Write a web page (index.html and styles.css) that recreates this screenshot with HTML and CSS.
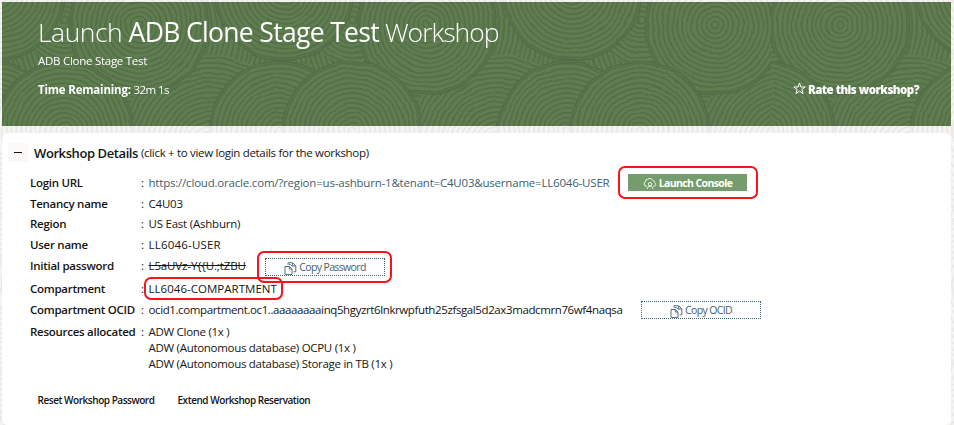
FILE: index.html
```html
<!DOCTYPE html>
<html lang="en">
<head>
<meta charset="utf-8">
<title>Launch Workshop</title>
<link rel="stylesheet" href="styles.css">
</head>
<body>
<svg class="defs" width="0" height="0" aria-hidden="true">
  <defs>
    <radialGradient id="rings" gradientUnits="userSpaceOnUse" cx="0" cy="0" r="4.9" spreadMethod="repeat">
      <stop class="base" offset="0"/><stop class="base" offset=".45"/>
      <stop class="line" offset=".68"/><stop class="line" offset=".82"/>
      <stop class="base" offset="1"/>
    </radialGradient>
    <radialGradient id="rings-pale" gradientUnits="userSpaceOnUse" cx="0" cy="0" r="4.9" spreadMethod="repeat">
      <stop class="pale-base" offset="0"/><stop class="pale-base" offset=".45"/>
      <stop class="pale-line" offset=".68"/><stop class="pale-line" offset=".82"/>
      <stop class="pale-base" offset="1"/>
    </radialGradient>
    <filter id="wobble" x="0" y="0" width="100%" height="100%" color-interpolation-filters="sRGB">
      <feTurbulence type="fractalNoise" baseFrequency=".06" numOctaves="1" seed="4"/>
      <feDisplacementMap in="SourceGraphic" scale="4" xChannelSelector="R" yChannelSelector="G"/>
    </filter>
    <g id="disc"><circle r="70"/><circle class="rim" r="69.5"/></g>
    <g id="tile">
      <circle r="200" transform="translate(139 25)"/>
      <circle r="90" transform="translate(210 145)"/>
      <circle r="45" transform="translate(65 20)"/>
      <use href="#disc" transform="translate(139 25)"/>
      <use href="#disc" transform="translate(-4 -9)"/>
      <use href="#disc" transform="translate(284 -9)"/>
      <use href="#disc" transform="translate(279 131)"/>
      <use href="#disc" transform="translate(352 131)"/>
      <use href="#disc" transform="translate(-9 131)"/>
      <use href="#disc" transform="translate(64 131)"/>
    </g>
    <clipPath id="left"><rect width="288" height="430"/></clipPath>
    <clipPath id="right"><rect x="70" width="218" height="430"/></clipPath>
    <g id="swirls">
      <g clip-path="url(#left)"><use href="#tile"/></g>
      <g transform="translate(288)"><g clip-path="url(#left)"><use href="#tile"/></g></g>
      <g transform="translate(576)"><g clip-path="url(#left)"><use href="#tile"/></g></g>
      <g transform="translate(701)"><g clip-path="url(#right)"><use href="#tile"/></g></g>
    </g>
    <symbol id="copy" viewBox="0 0 13 13">
      <path d="M1 4.5h4.5L8 7v5.4H1zM5.3 4.7V7H8M4 2.7V.8h4.8l3 3v6H9.6M8.7 1v3h3M4.8 2.6h1.7l2 2"/>
    </symbol>
  </defs>
</svg>
<svg class="backdrop" viewBox="0 0 954 425" aria-hidden="true">
  <g fill="url(#rings-pale)" class="pale" filter="url(#wobble)">
    <use href="#swirls"/><use href="#swirls" y="155"/><use href="#swirls" y="310"/>
  </g>
</svg>

<header class="hero">
  <svg class="hero-art" viewBox="2 2 949 124" aria-hidden="true">
    <g fill="url(#rings)" class="green" filter="url(#wobble)"><use href="#swirls"/></g>
  </svg>
  <h1><span class="light-a">Launch </span><span class="name">ADB Clone Stage Test</span><span class="light-b"> Workshop</span></h1>
  <p class="subtitle">ADB Clone Stage Test</p>
  <div class="hero-row">
    <div><b class="remaining">Time Remaining:</b> <span class="time">32m 1s</span></div>
    <div class="rate">
      <svg width="13" height="13" viewBox="0 0 13 13"><path d="M6.5 1l1.4 4h4.3L8.8 7.5l1.3 4.2-3.6-2.6-3.6 2.6 1.3-4.2L.8 5h4.3z"/></svg>
      <b>Rate this workshop?</b>
    </div>
  </div>
</header>

<main class="card">
  <div class="section-head">
    <button class="toggle" aria-label="Collapse"><i></i></button>
    <h2>Workshop Details</h2>
    <span class="hint">(click + to view login details for the workshop)</span>
  </div>

  <div class="details">
    <b>Login URL</b><i>:</i>
    <div class="value"><a class="url">https://cloud.oracle.com/?region=us-ashburn-1&amp;tenant=C4U03&amp;username=LL6046-USER</a>
      <button class="btn launch marked"><svg width="14" height="13" viewBox="0 0 14 13"><path d="M4 9.2H3A2.3 2.3 0 0 1 2.5 4.8 2.2 2.2 0 0 1 4.6 2.3 3.3 3.3 0 0 1 9.8 3.4 2.4 2.4 0 0 1 11.6 5.7 1.9 1.9 0 0 1 11.5 9.2H10.4M5.4 7.2a1.7 1.7 0 1 1 3.4 0 1.7 1.7 0 1 1-3.4 0M4.4 12c0-1.8 1-2.8 2.7-2.8s2.7 1 2.7 2.8"/></svg>Launch Console</button></div>
    <b>Tenancy name</b><i>:</i><div class="value">C4U03</div>
    <b>Region</b><i>:</i><div class="value">US East (Ashburn)</div>
    <b>User name</b><i>:</i><div class="value"><span class="user">LL6046-USER</span></div>
    <b>Initial password</b><i>:</i>
    <div class="value"><span class="secret">L5aUVz-Y{{U.;tZBU</span>
      <button class="btn copy marked"><svg width="13" height="13"><use href="#copy"/></svg>Copy Password</button></div>
    <b>Compartment</b><i>:</i><div class="value"><span class="compartment marked">LL6046-COMPARTMENT</span></div>
    <b>Compartment OCID</b><i>:</i>
    <div class="value"><span class="ocid">ocid1.compartment.oc1..aaaaaaaainq5hgyzrt6lnkrwpfuth25zfsgal5d2ax3madcmrn76wf4naqsa</span>
      <button class="btn copy"><svg width="13" height="13"><use href="#copy"/></svg>Copy OCID</button></div>
    <b>Resources allocated</b><i>:</i>
    <div class="resources"><div>ADW Clone (1x )</div><div>ADW (Autonomous database) OCPU (1x )</div><div>ADW (Autonomous database) Storage in TB (1x )</div></div>
  </div>

  <footer class="actions"><a>Reset Workshop Password</a><a>Extend Workshop Reservation</a></footer>
</main>
</body>
</html>
```
FILE: styles.css
```css
* { box-sizing: border-box; }

body {
  margin: 0;
  padding: 2px 3px 0 2px;
  height: 425px;
  overflow: hidden;
  background: #f5f4f2;
  color: #161513;
  font: 11.5px/16px "Open Sans", "Noto Sans", sans-serif;
  letter-spacing: -.22px;
}

h1, h2, p { margin: 0; }
i { font-style: normal; }
b { font-weight: 600; letter-spacing: -.27px; }
.defs { position: absolute; }

.backdrop { position: absolute; left: 0; top: 0; width: 954px; height: 425px; z-index: -1; }
.base { stop-color: #5f7d4f; }
.line { stop-color: #526f48; }
.pale-base { stop-color: #f5f4f2; }
.pale-line { stop-color: #eae8e6; }
.green { --rim: #516d47; }
.pale { --rim: #eae8e6; }
.rim { fill: none; stroke: var(--rim); stroke-width: 1.5; }

.hero {
  position: relative;
  height: 124px;
  padding: 13px 32px 0 36px;
  background: #5f7d4f;
  color: #fff;
}
.hero-art { position: absolute; left: 0; top: 0; width: 949px; height: 124px; z-index: 0; }
.hero > :not(.hero-art) { position: relative; }
h1 { font-size: 26.5px; line-height: 34px; font-weight: 300; white-space: pre; }
.light-a { letter-spacing: -.5px; }
.name { font-weight: 500; letter-spacing: -.66px; }
.light-b { letter-spacing: -1px; }
.subtitle { margin-top: 4px; letter-spacing: -.27px; }
.hero-row { display: flex; justify-content: space-between; margin-top: 13px; }
.remaining { font-weight: 700; letter-spacing: -.2px; }
.time { letter-spacing: -.6px; }
.rate { display: flex; gap: 2px; }
.rate b { font-weight: 800; letter-spacing: -.52px; }
.rate svg { fill: none; stroke: #fff; stroke-width: 1; }

.card {
  height: 292px;
  margin-top: 7px;
  padding: 10px 0 0 6px;
  background: #fff;
  border-radius: 6px;
}

.section-head { display: flex; align-items: center; height: 19px; white-space: nowrap; }
.toggle { display: grid; place-items: center; width: 20px; height: 19px; padding: 0; border: 0; background: #fbf9f8; }
.toggle i { width: 8px; height: 1px; background: #161513; }
h2 { margin-left: 6px; font-size: 13px; font-weight: 600; letter-spacing: -.41px; }
.hint { margin-left: 3px; letter-spacing: -.31px; }

.details {
  display: grid;
  grid-template-columns: 111px 7.5px auto;
  grid-template-rows: 20px 21px 20px 22px 20px 25px 18px 56px;
  align-items: center;
  margin: 11px 0 0 22px;
  white-space: nowrap;
}
.value { display: flex; align-items: center; }
.url { width: 461.5px; color: #41606e; letter-spacing: -.2px; }
.details > b:nth-last-of-type(1), .details > i:nth-last-of-type(1), .resources { align-self: start; padding-top: 5px; }
.resources { letter-spacing: -.29px; }
.user { letter-spacing: .2px; }
.secret { width: 98.5px; text-decoration: line-through; letter-spacing: -.12px; }
.ocid { width: 474.5px; letter-spacing: -.39px; }
.compartment { letter-spacing: .03px; }

.marked { position: relative; }
.marked::after { content: ""; position: absolute; border: 2px solid #f5141b; border-radius: 7px; }

.btn {
  display: flex;
  align-items: center;
  justify-content: center;
  gap: 2px;
  width: 120px;
  height: 18px;
  padding: 0;
  font: 10.5px/16px "Open Sans", sans-serif;
  letter-spacing: -.62px;
}
.btn svg { fill: none; stroke: currentColor; stroke-width: .9; position: relative; top: 1px; }
.launch { width: 119px; height: 17px; margin: -1px 0 0 18px; border: 0; background: #759c6c; color: #fff; font-weight: 700; }
.launch::after { inset: -8px -11px -8px -10px; }
.copy { margin-left: 18px; border: 1px dotted #41606e; background: #fff; color: #41606e; }
.copy.marked { margin-top: 2px; }
.copy.marked::after { inset: -8px -8px -8px -9px; }
.compartment::after { inset: -4px -6px -3px -5px; }

.actions { display: flex; gap: 23px; margin: 17px 0 0 29.5px; font-size: 10px; font-weight: 600; letter-spacing: -.46px; }
```
